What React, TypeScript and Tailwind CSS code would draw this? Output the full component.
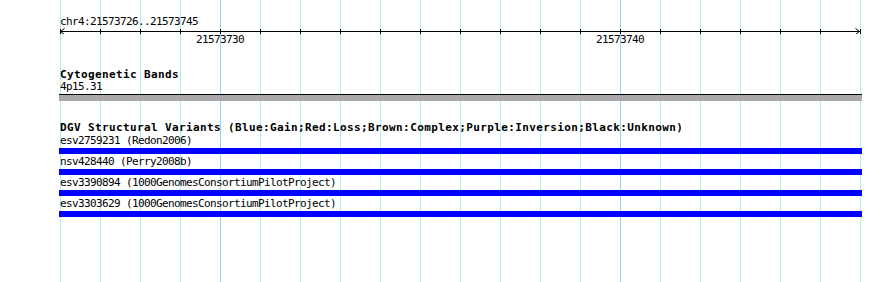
const FONT = "font-['DejaVu_Sans_Mono','Liberation_Mono',monospace]";

const tracks = [
  "esv2759231 (Redon2006)",
  "nsv428440 (Perry2008b)",
  "esv3390894 (1000GenomesConsortiumPilotProject)",
  "esv3303629 (1000GenomesConsortiumPilotProject)",
];

// guide lines every 40px from x=60 to x=860; every 10th base is a darker line
const guides = Array.from({ length: 21 }, (_, i) => i);

function Ruler() {
  const ticks = guides.map((i) => 60 + i * 40);
  return (
    <svg width={890} height={6} className="block" shapeRendering="crispEdges">
      <line x1={60} y1={3.5} x2={860} y2={3.5} stroke="#000" strokeWidth={1} />
      {ticks.map((x) => (
        <line key={x} x1={x + 0.5} y1={1} x2={x + 0.5} y2={6} stroke="#000" strokeWidth={1} />
      ))}
      <polyline points="64.5,0.5 60.5,3.5 64.5,6.5" fill="none" stroke="#000" strokeWidth={1} shapeRendering="auto" />
      <polyline points="855.5,0.5 859.5,3.5 855.5,6.5" fill="none" stroke="#000" strokeWidth={1} shapeRendering="auto" />
    </svg>
  );
}

export default function App() {
  return (
    <div className={`relative h-[282px] w-[890px] overflow-hidden bg-white text-black ${FONT}`}>
      {/* vertical guide lines */}
      <div className="absolute inset-y-0 left-[60px] flex w-[801px] justify-between">
        {guides.map((i) => (
          <div key={i} className={i === 4 || i === 14 ? "w-px bg-[#8fd3ee]" : "w-px bg-[#adeef2]"} />
        ))}
      </div>

      <div className="relative pt-[16px]">
        <div className="h-[12px] pl-[60px] text-[11px] leading-[12px] tracking-[-0.62px] whitespace-nowrap">
          chr4:21573726..21573745
        </div>
        <Ruler />
        <div className="flex h-[12px] gap-[352px] pl-[196px] text-[11px] leading-[12px] tracking-[-0.62px]">
          <span>21573730</span>
          <span>21573740</span>
        </div>

        <div className="mt-[23px] h-[12px] pl-[60px] text-[11px] leading-[12px] font-bold tracking-[0.38px] whitespace-nowrap">
          Cytogenetic Bands
        </div>
        <div className="h-[12px] pl-[60px] text-[11px] leading-[12px] tracking-[-0.62px]">4p15.31</div>
        <div className="mt-[1px] ml-[59px] h-[7px] w-[803px] border-t border-black bg-[#aba8ab]" />

        <div className="mt-[21px] h-[12px] pl-[60px] text-[11px] leading-[12px] font-bold tracking-[0.38px] whitespace-nowrap">
          DGV Structural Variants (Blue:Gain;Red:Loss;Brown:Complex;Purple:Inversion;Black:Unknown)
        </div>
        <div className="mt-[1px] flex flex-col gap-[2px]">
          {tracks.map((t) => (
            <div key={t} className="flex flex-col">
              <div className="h-[12px] pl-[60px] text-[11px] leading-[12px] tracking-[-0.62px] whitespace-nowrap">{t}</div>
              <div className="mt-[1px] ml-[59px] h-[6px] w-[803px] bg-[#0000ff]" />
            </div>
          ))}
        </div>
      </div>
    </div>
  );
}
